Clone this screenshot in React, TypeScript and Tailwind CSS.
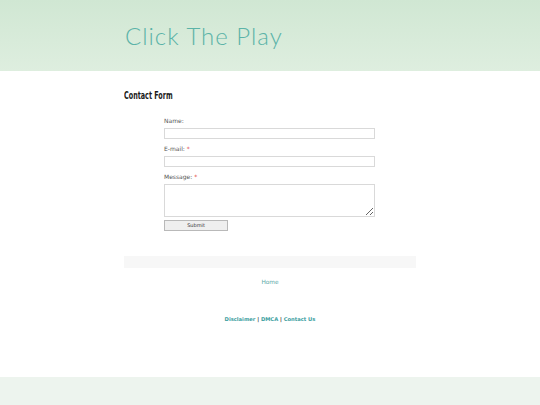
export default function App() {
  return (
    <div className="min-h-[405px] flex flex-col bg-white font-['DejaVu_Sans',sans-serif]">
      <header className="h-[71px] bg-gradient-to-b from-[#d0e7d3] to-[#deeedf]">
        <div className="mx-auto w-[292px] pt-[21px]">
          <h1 className="pl-px font-['Lato',sans-serif] text-[24px] font-light leading-[30px] tracking-[1px] text-[#5bb3a8]">
            Click The Play
          </h1>
        </div>
      </header>

      <main className="mx-auto w-[292px] flex-1">
        <h2 className="mt-[18px] origin-left scale-x-[0.68] font-['DejaVu_Sans_Condensed','DejaVu_Sans',sans-serif] text-[10.5px] font-bold leading-[12px] text-[#1a1a1a]">
          Contact Form
        </h2>

        <form className="ml-[40px] mt-[15px] w-[211px] text-[6px] text-[#555]">
          <label className="block leading-[10px]">Name:</label>
          <input type="text" className="mt-[2px] block h-[11px] w-full border border-[#d9d9d9] bg-white" />

          <label className="mt-[5px] block leading-[10px]">
            E-mail: <span className="text-[#e0403a]">*</span>
          </label>
          <input type="text" className="mt-[2px] block h-[11px] w-full border border-[#d9d9d9] bg-white" />

          <label className="mt-[5px] block leading-[10px]">
            Message: <span className="text-[#e0403a]">*</span>
          </label>
          <textarea className="mt-[2px] block h-[33px] w-full resize-y border border-[#d9d9d9] bg-white" />

          <button
            type="button"
            className="mt-[3px] block h-[11px] w-[64px] border border-[#b9b9b9] bg-[#efefef] text-[5px] leading-[9px] text-[#333]"
          >
            Submit
          </button>
        </form>

        <div className="mt-[25px] h-[12px] bg-[#f7f7f7]" />

        <nav className="mt-[10px] text-center text-[5.8px] leading-[8px] text-[#5aa9a6]">
          <a>Home</a>
        </nav>

        <p className="mt-[29px] text-center text-[5.2px] font-bold leading-[8px] text-[#333]">
          <a className="text-[#3b9ea0]">Disclaimer</a> | <a className="text-[#3b9ea0]">DMCA</a> |{" "}
          <a className="text-[#3b9ea0]">Contact Us</a>
        </p>
      </main>

      <footer className="mt-[54px] h-[28px] bg-[#edf4ee]" />
    </div>
  );
}
